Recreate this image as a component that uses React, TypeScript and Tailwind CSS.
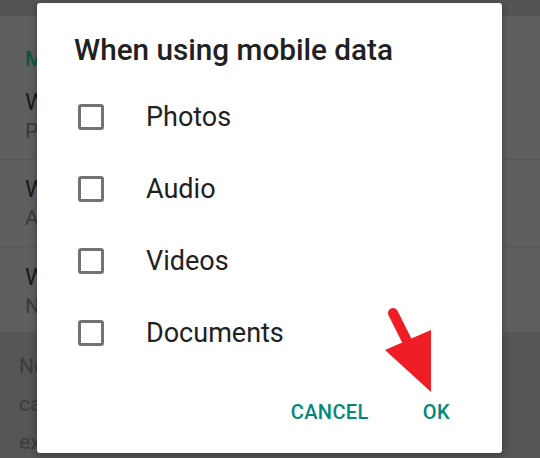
import React from "react";

const options = ["Photos", "Audio", "Videos", "Documents"];

function SettingsBehind() {
  return (
    <div className="flex h-full w-full flex-col bg-[#5f5f5f]">
      <div className="h-[16px] shrink-0 bg-[#545454]" />
      <div className="shrink-0 pl-[25px] pt-[29px] text-[21px] font-medium leading-[28px] text-[#0c5446]">
        Media auto-download
      </div>
      {/* ── rows ── */}
      <div className="flex shrink-0 flex-col">
        {[
          ["When using mobile data", "Photos"],
          ["When connected on Wi-Fi", "All media"],
          ["When roaming", "No media"],
        ].map(([t, s], i) => (
          <div
            key={t}
            className={`flex h-[87px] shrink-0 flex-col justify-center pl-[25px] ${
              i < 2 ? "border-b border-[#565656]" : ""
            }`}
          >
            <span className="text-[24px] leading-[30px] text-[#1c1c1c]">{t}</span>
            <span className="text-[21px] leading-[28px] text-[#3a3a3a]">{s}</span>
          </div>
        ))}
      </div>
      <div className="mt-[-2px] min-h-0 flex-1 overflow-hidden bg-[#565656] pl-[19px] pt-[15px] text-[21px] leading-[38px] text-[#3c3c3c]">
        <p>Note: media is downloaded automatically</p>
        <p>can't be turned off for voice messages</p>
        <p>except when roaming.</p>
      </div>
    </div>
  );
}

function CheckRow({ label }: { label: string }) {
  return (
    <div className="flex h-[72px] items-center">
      <span className="ml-[41px] h-[26px] w-[26px] rounded-[3px] border-[3px] border-[#737373]" />
      <span className="ml-[42px] text-[27px] leading-[32px] text-[#212121]">{label}</span>
    </div>
  );
}

export default function App() {
  return (
    <div
      className="relative h-[458px] w-[540px] overflow-hidden"
      style={{ fontFamily: "Roboto, 'Noto Sans', sans-serif" }}
    >
      <SettingsBehind />

      {/* ── dialog ── */}
      <div className="absolute left-[37px] top-[3px] flex h-[450px] w-[465px] flex-col rounded-[3px] bg-white shadow-[0_2px_8px_rgba(0,0,0,0.35)]">
        <h2 className="pl-[37px] pt-[29px] text-[29.7px] font-medium leading-[36px] text-[#212121]">
          When using mobile data
        </h2>
        <div className="mt-[13px] flex flex-col">
          {options.map((o) => (
            <CheckRow key={o} label={o} />
          ))}
        </div>
        <div className="mt-auto flex items-center justify-end gap-[54px] pb-[26px] pr-[52px] text-[20px] font-medium tracking-[0.4px] text-[#00897b]">
          <span>CANCEL</span>
          <span>OK</span>
        </div>
      </div>

      {/* ── red arrow annotation ── */}
      <svg
        className="absolute left-[380px] top-[305px]"
        width="60"
        height="95"
        viewBox="0 0 60 95"
      >
        <line x1="13" y1="8" x2="30" y2="42" stroke="#ee1c25" strokeWidth="10" strokeLinecap="round" />
        <polygon points="5,45 51,25 51,87" fill="#ee1c25" />
      </svg>
    </div>
  );
}
